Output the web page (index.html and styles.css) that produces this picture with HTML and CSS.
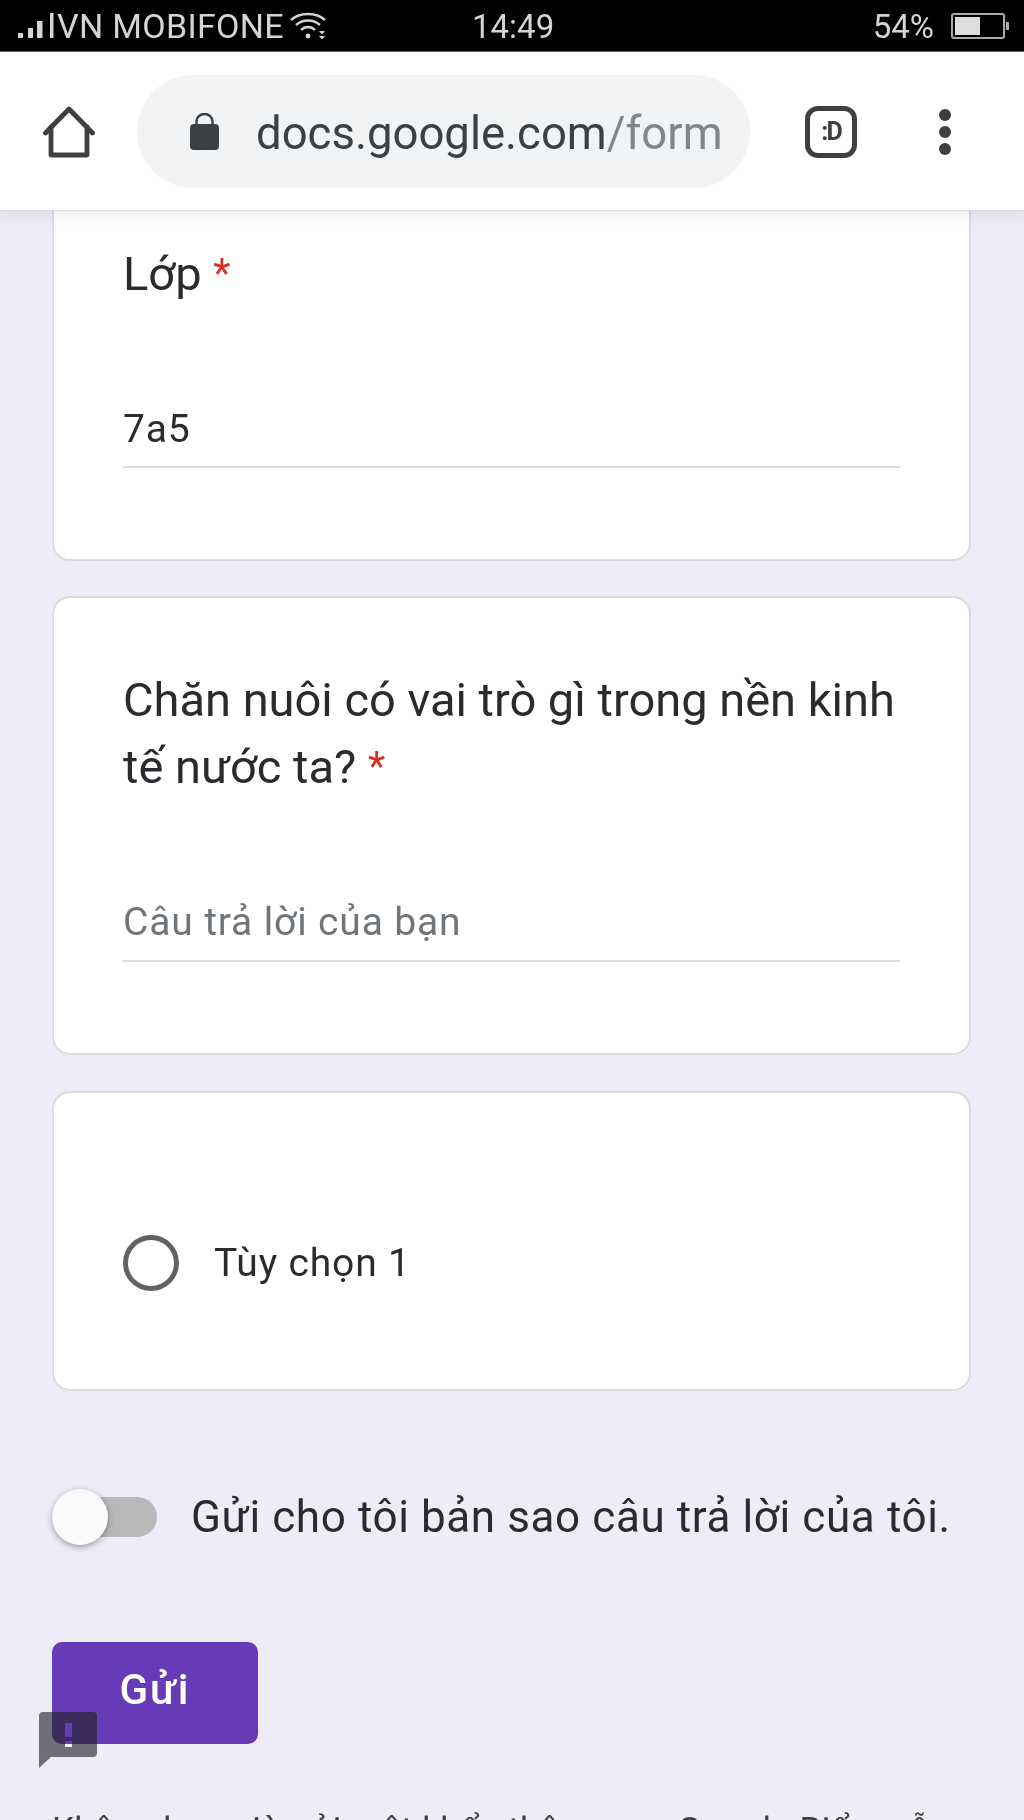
FILE: index.html
```html
<!DOCTYPE html>
<html lang="vi">
    <head>
        <meta charset="UTF-8">
        <meta name="viewport" content="width=device-width, initial-scale=1.0">
        <title>Google Biểu mẫu</title>
        <link rel="stylesheet" href="styles.css">
    </head>

    <body>
        <div class="phone">
            <div class="status-bar">
                <div class="status-left">
                    <svg class="signal" width="38" height="26" viewBox="0 0 38 26">
                        <rect x="2" y="20" width="5" height="5" fill="#d4d4d4"/>
                        <rect x="12" y="15" width="5" height="10" fill="#d4d4d4"/>
                        <rect x="21" y="8" width="5.5" height="17" fill="#d4d4d4"/>
                        <rect x="34" y="0" width="3.5" height="25" fill="#d4d4d4"/>
                    </svg>
                    <span class="carrier">VN MOBIFONE</span>
                    <svg class="wifi" width="36" height="28" viewBox="0 0 36 28" fill="none" stroke="#d4d4d4" stroke-width="2.4">
                        <path d="M1 8C10 0 26 0 35 8"/>
                        <path d="M6 13C13 7 23 7 30 13"/>
                        <path d="M11 18C15 14 21 14 25 18"/>
                        <circle cx="18" cy="24" r="2.4" fill="#d4d4d4" stroke="none"/>
                        <path d="M29 19h6l-3 3.5zM29 24h6l-3 3.5z" fill="#d4d4d4" stroke="none"/>
                    </svg>
                </div>
                <div class="status-time">14:49</div>
                <div class="status-right">
                    <span class="percent">54%</span>
                    <div class="battery"><div class="battery-fill"></div></div>
                    <div class="battery-tip"></div>
                </div>
            </div>

            <div class="toolbar">
                <svg class="home-icon" width="52" height="52" viewBox="0 0 52 52" fill="none" stroke="#3c4043" stroke-width="4.8" stroke-linejoin="round" stroke-linecap="round">
                    <path d="M2.5 27L26 3L49.5 27"/>
                    <path d="M8 21V49H44V21"/>
                </svg>
                <div class="url-bar">
                    <svg class="lock" width="29" height="37" viewBox="0 0 29 37">
                        <path d="M6.5 13V8.500a8 7.500 0 0 1 16 0V13" fill="none" stroke="#3c4043" stroke-width="2.4"/>
                        <rect x="0" y="11" width="29" height="26" rx="4" fill="#3c4043"/>
                    </svg>
                    <div class="url"><span class="url-host">docs.google.com</span><span class="url-path">/form</span></div>
                </div>
                <div class="tabs-icon">:D</div>
                <div class="menu-icon">
                    <span class="dot"></span>
                    <span class="dot"></span>
                    <span class="dot"></span>
                </div>
            </div>

            <div class="content">
                <div class="card card-class">
                    <div class="question">Lớp <span class="required">*</span></div>
                    <div class="answer filled">7a5</div>
                </div>

                <div class="card card-role">
                    <div class="question">Chăn nuôi có vai trò gì trong nền kinh tế nước ta? <span class="required">*</span></div>
                    <div class="answer empty">Câu trả lời của bạn</div>
                </div>

                <div class="card card-option">
                    <div class="radio"></div>
                    <div class="option-label">Tùy chọn 1</div>
                </div>

                <div class="copy-row">
                    <div class="switch">
                        <div class="switch-thumb"></div>
                    </div>
                    <div class="copy-label">Gửi cho tôi bản sao câu trả lời của tôi.</div>
                </div>

                <div class="submit-btn">Gửi</div>

                <div class="footer-note">Không bao giờ gửi mật khẩu thông qua Google Biểu mẫu.</div>
            </div>

            <svg class="report-icon" width="58" height="56" viewBox="0 0 58 56">
                <path fill-rule="evenodd" d="M4 0H54a4 4 0 0 1 4 4V41a4 4 0 0 1-4 4H12L0 56V4a4 4 0 0 1 4-4ZM26 11V25H33V11ZM26 29V35H33V29Z" fill="#202124" fill-opacity="0.62"/>
            </svg>
        </div>
    </body>
</html>
```

FILE: styles.css
```css
*{
    box-sizing: border-box;
}
html, body{
    margin: 0;
    padding: 0;
}
body{
    font-family: Roboto, "Noto Sans", sans-serif;
    background-color: #efebf9;
}
.phone{
    position: relative;
    width: 1024px;
    height: 1820px;
    overflow: hidden;
    background-color: #efebf9;
    filter: blur(0.7px);
}

/* status bar */
.status-bar{
    height: 52px;
    background-color: #000;
    border-bottom: 1px solid #666;
    color: #d4d4d4;
    font-size: 33px;
    display: grid;
    grid-template-columns: 456px auto 1fr;
    align-items: center;
    padding: 1px 15px 0 16px;
}
.status-left{
    display: flex;
    align-items: center;
}
.carrier{
    margin-left: 3px;
    font-size: 34px;
    letter-spacing: 0.3px;
    white-space: nowrap;
}
.wifi{
    margin-left: 6px;
}
.status-right{
    display: flex;
    align-items: center;
    justify-content: flex-end;
}
.percent{
    margin-right: 17px;
}
.battery{
    width: 54px;
    height: 26px;
    border: 2px solid #aaa;
    border-radius: 3px;
    padding: 2px;
}
.battery-fill{
    width: 25px;
    height: 100%;
    background-color: #ddd;
}
.battery-tip{
    width: 3px;
    height: 8px;
    background-color: #aaa;
    margin-left: 1px;
}

/* browser toolbar */
.toolbar{
    height: 159px;
    background-color: #fff;
    display: flex;
    align-items: center;
    padding: 1px 0 0 43px;
    border-bottom: 1px solid #ddd;
    box-shadow: 0 4px 16px rgba(0,0,0,0.08);
    position: relative;
    z-index: 2;
}
.url-bar{
    margin-left: 42px;
    width: 613px;
    height: 113px;
    border-radius: 57px;
    background-color: #f1f3f4;
    display: flex;
    align-items: center;
    padding-left: 53px;
}
.url{
    margin-left: 37px;
    padding-top: 3px;
    font-size: 45.5px;
    white-space: nowrap;
}
.url-host{
    color: #3c4043;
}
.url-path{
    color: #80868b;
}
.tabs-icon{
    margin-left: 55px;
    width: 52px;
    height: 52px;
    border: 5px solid #3c4043;
    border-radius: 13px;
    color: #3c4043;
    font-size: 25px;
    font-weight: 700;
    letter-spacing: -2px;
    display: flex;
    align-items: center;
    justify-content: center;
}
.menu-icon{
    margin-left: 82px;
    display: flex;
    flex-direction: column;
    gap: 5px;
}
.dot{
    width: 12px;
    height: 12px;
    border-radius: 50%;
    background-color: #3c4043;
}

/* form */
.content{
    padding: 0 53px 0 52px;
    margin-top: -39px;
}
.card{
    background-color: #fff;
    border: 2px solid #dadce0;
    border-radius: 18px;
    padding: 0 69px;
}
.card-class{
    height: 389px;
    padding-top: 66px;
    margin-bottom: 35px;
}
.card-role{
    height: 459px;
    padding-top: 68px;
    margin-bottom: 36px;
}
.card-option{
    height: 300px;
    display: flex;
    align-items: center;
    padding-top: 44px;
}
.question{
    font-size: 47px;
    line-height: 67px;
    color: #2a2b2e;
}
.required{
    color: #d93025;
    font-size: 40px;
    vertical-align: 3px;
}
.answer{
    font-size: 39px;
    letter-spacing: 0.85px;
    border-bottom: 2px solid #dadce0;
    height: 58px;
    line-height: 37px;
    margin-top: 104px;
}
.filled{
    margin-top: 103px;
    line-height: 39px;
    color: #2a2b2e;
}
.empty{
    color: #70757a;
}
.radio{
    width: 56px;
    height: 56px;
    border: 5px solid #5f6368;
    border-radius: 50%;
    flex-shrink: 0;
}
.option-label{
    margin-left: 35px;
    font-size: 39px;
    letter-spacing: 0.85px;
    color: #2a2b2e;
}
.copy-row{
    margin-top: 96px;
    display: flex;
    align-items: center;
    height: 60px;
}
.switch{
    width: 105px;
    height: 40px;
    border-radius: 20px;
    background-color: #b9b9b9;
    position: relative;
    flex-shrink: 0;
}
.switch-thumb{
    position: absolute;
    left: 0;
    top: -8px;
    width: 56px;
    height: 56px;
    border-radius: 50%;
    background-color: #fafafa;
    box-shadow: 0 2px 6px rgba(0,0,0,0.35);
}
.copy-label{
    margin-left: 34px;
    font-size: 44px;
    letter-spacing: 0.6px;
    color: #2a2b2e;
    white-space: nowrap;
}
.submit-btn{
    margin-top: 95px;
    width: 206px;
    height: 102px;
    border-radius: 10px;
    background-color: #673ab7;
    color: #fff;
    font-size: 42px;
    font-weight: 500;
    letter-spacing: 2px;
    display: flex;
    align-items: center;
    justify-content: center;
    padding-bottom: 7px;
}
.footer-note{
    margin-top: 66px;
    font-size: 35px;
    letter-spacing: 0.4px;
    color: #3c4043;
    white-space: nowrap;
}

/* floating report button */
.report-icon{
    position: absolute;
    left: 39px;
    top: 1712px;
}
```
